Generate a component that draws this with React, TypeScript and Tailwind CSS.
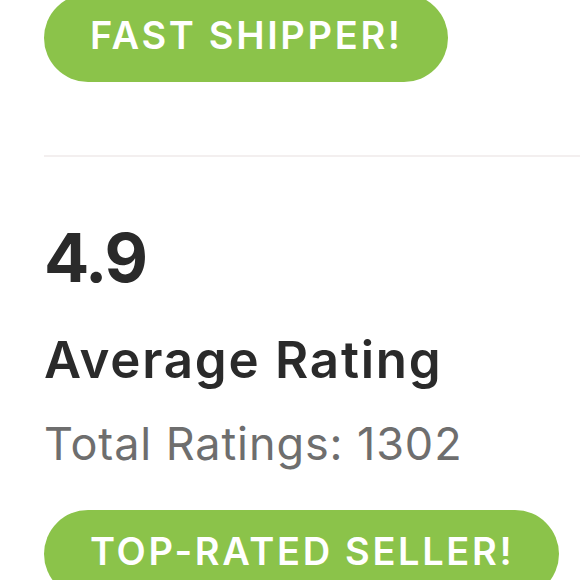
const font = { fontFamily: 'Inter, Lato, "Noto Sans", sans-serif' };

function Badge({ label }: { label: string }) {
  return (
    <div className="flex h-[88px] w-fit items-center rounded-full bg-[#8bc34a] pb-[6px] pl-[46px] pr-[45px]">
      <span className="text-[38px] font-semibold leading-none tracking-[0.07em] text-white">{label}</span>
    </div>
  );
}

export default function App() {
  return (
    <div className="h-[580px] w-[580px] overflow-hidden bg-white pl-[44px] [font-variant-ligatures:none]" style={font}>
      <div className="-mt-[6px]">
        <Badge label="FAST SHIPPER!" />
      </div>

      <div className="mt-[73px] h-[2px] bg-[#f3efef]" />

      <div className="mt-[67px] text-[67px] font-bold leading-none tracking-[-0.03em] text-[#2a2a2a]">4.9</div>
      <div className="mt-[43px] text-[51px] font-semibold leading-none tracking-[0.035em] text-[#2a2a2a]">Average Rating</div>
      <div className="mt-[36px] text-[45px] font-normal leading-none tracking-[0.02em] text-[#6e6e6e]">Total Ratings: 1302</div>

      <div className="mt-[44px]">
        <Badge label="TOP-RATED SELLER!" />
      </div>
    </div>
  );
}
